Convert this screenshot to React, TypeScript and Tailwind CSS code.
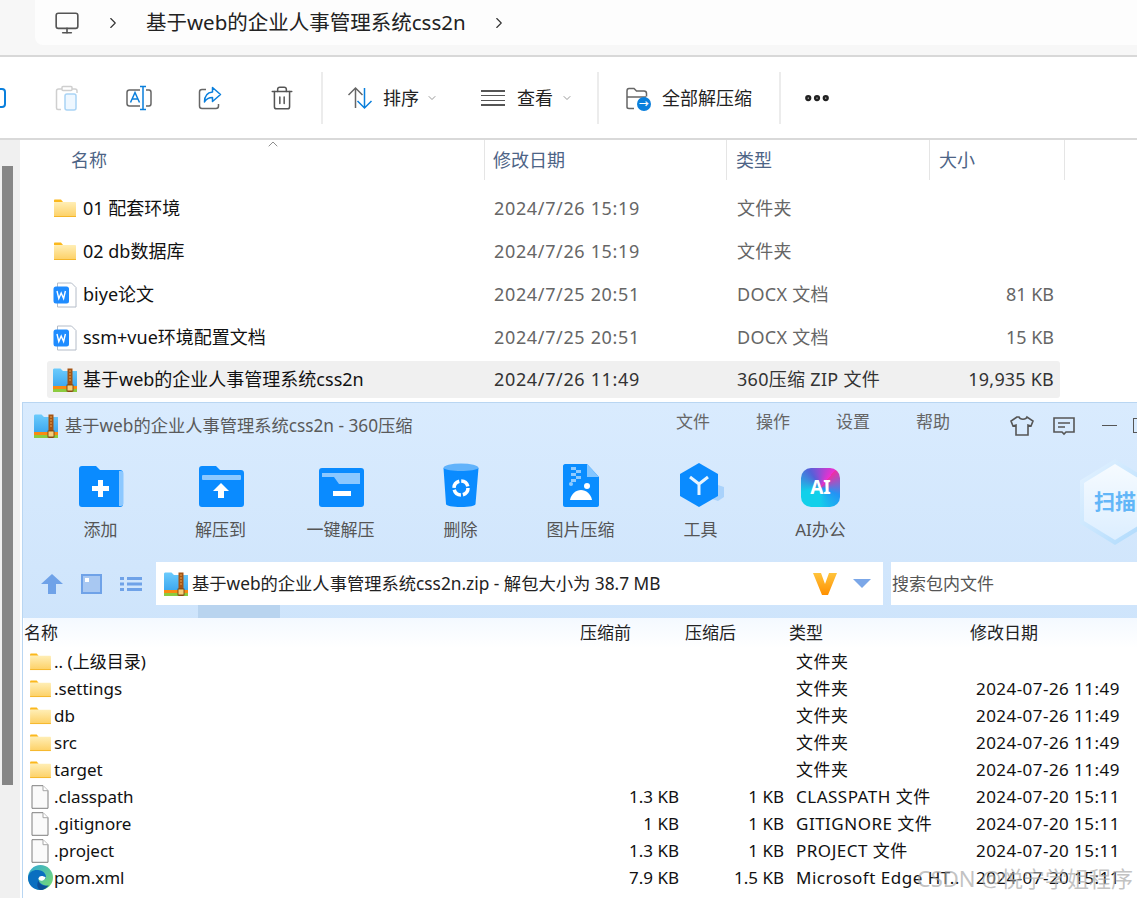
import React from "react";
import { ChevronDown, ChevronRight, ChevronUp, Ellipsis, Monitor, Trash2 } from "lucide-react";

const uiFont = { fontFamily: '"Noto Sans", "Noto Sans CJK SC", sans-serif' };

const FolderIcon = ({ className }: { className: string }) => (
  <svg viewBox="0 0 24 19" className={className}>
    <defs>
      <linearGradient id="folderFace" x1="0" y1="0" x2="0" y2="1">
        <stop offset="0" stopColor="#ffeeb5" />
        <stop offset="1" stopColor="#fdd064" />
      </linearGradient>
    </defs>
    <path d="M1 1.5C1 .9 1.4.5 2 .5h6l2 2.5H1z" fill="#fbb81c" />
    <rect x="1" y="3" width="22" height="15" rx="0.8" fill="url(#folderFace)" />
    <rect x="1" y="17" width="22" height="1" fill="#f5b62a" />
  </svg>
);

const WordIcon = () => (
  <svg viewBox="0 0 24 26" className="h-[26px] w-[24px] shrink-0">
    <path d="M4.5 1h14l4.5 4.5V25H4.5z" fill="#fff" stroke="#b4bcc8" />
    <rect x="0.5" y="4.5" width="15.5" height="17" rx="2.5" fill="#1f8cff" />
    <path d="M4 9l1.8 7.5L8.2 11l2.4 5.5L12.4 9" fill="none" stroke="#fff" strokeWidth="1.4" />
  </svg>
);

const ZipIcon = ({ className }: { className: string }) => (
  <svg viewBox="0 0 24 24" className={className}>
    <defs>
      <linearGradient id="zipFace" x1="0" y1="0" x2="0" y2="1">
        <stop offset="0" stopColor="#6ccbfc" />
        <stop offset="1" stopColor="#3ea9f0" />
      </linearGradient>
    </defs>
    <path d="M0 2C0 1 .6.500 1.500.500h6L10 3h14v15H0z" fill="url(#zipFace)" />
    <rect x="0" y="18" width="24" height="3" fill="#f98a12" />
    <rect x="0" y="21" width="24" height="3" fill="#8ccb3f" />
    <rect x="14.500" y="0.500" width="5" height="23.500" fill="#a55413" />
    <path d="M16 3h2M16 6h2M16 9h2M16 12h2" stroke="#e7a552" strokeWidth="1.200" />
    <rect x="14" y="17" width="6" height="6" fill="#f6cf7a" stroke="#6d3a0c" strokeWidth="0.800" />
  </svg>
);

const FileIcon = () => (
  <svg viewBox="0 0 18 24" className="h-[24px] w-[18px]">
    <path d="M1 .700h11l5 5v17.600H1z" fill="#fafafa" stroke="#7f7f7f" />
    <path d="M12 .700v5h5" fill="#fff" stroke="#a6a6a6" />
  </svg>
);

const EdgeIcon = () => (
  <svg viewBox="0 0 24 24" className="h-[25px] w-[25px]">
    <defs>
      <linearGradient id="edgeTop" x1="0" y1="0" x2="1" y2="1">
        <stop offset="0" stopColor="#2ea7d8" />
        <stop offset="1" stopColor="#7ee06a" />
      </linearGradient>
    </defs>
    <circle cx="12" cy="12" r="12" fill="url(#edgeTop)" />
    <path d="M0 12C1 6 6 4 11 5c5 1 7 5 6 8-3 1-7 0-7 0 0 4 4 7 9 7-2 2.500-5 4-7 4C5 24 0 19 0 12z" fill="#0a6fc0" />
    <path d="M10 13c1-3 4-3 7-1-1 2-2 3-4 3-1.500 0-3-1-3-2z" fill="#fff" />
    <path d="M10 15c1 4 5 6 10 4.500-2 3-5 4.500-8 4.500-3-1-4-5-2-9z" fill="#0c4f96" />
  </svg>
);

const FolderPlus = () => (
  <svg viewBox="0 0 46 42" className="h-[42px] w-[46px]">
    <path d="M1 4c0-2 1-3 3-3h14l4 4h20c2 0 3 1 3 3v31c0 2-1 3-3 3H4c-2 0-3-1-3-3z" fill="#0a8bff" />
    <path d="M41 6h2c2 0 2.500 1 2.500 3v29c0 2-1 3-2.500 3h-2z" fill="#8cc8ff" />
    <rect x="14" y="21" width="17" height="5" fill="#fff" />
    <rect x="20" y="15" width="5" height="17" fill="#fff" />
  </svg>
);

const FolderUp = () => (
  <svg viewBox="0 0 46 42" className="h-[42px] w-[46px]">
    <path d="M1 4c0-2 1-3 3-3h14l4 4h21c2 0 3 1 3 3v31c0 2-1 3-3 3H4c-2 0-3-1-3-3z" fill="#0a8bff" />
    <rect x="4" y="10" width="39" height="5" rx="1" fill="#8cc8ff" />
    <path d="M23 18l8 8h-5v7h-6v-7h-5z" fill="#fff" />
  </svg>
);

const FolderMinus = () => (
  <svg viewBox="0 0 46 42" className="h-[42px] w-[46px]">
    <rect x="1" y="3" width="45" height="39" rx="3" fill="#0a8bff" />
    <path d="M4 8h38v11H21l-5-7H4z" fill="#8cc8ff" />
    <rect x="15" y="26" width="18" height="5" fill="#fff" />
  </svg>
);

const BinIcon = () => (
  <svg viewBox="0 0 36 44" className="h-[44px] w-[36px]">
    <ellipse cx="18" cy="5" rx="17.500" ry="4.500" fill="#62b3fb" />
    <path d="M.500 5c3 4 32 4 35 0l-3 36c-.2 2-6 3-14.500 3S3.200 43 3 41z" fill="#0a8bff" />
    <circle cx="18" cy="25" r="7" fill="none" stroke="#fff" strokeWidth="3.500" strokeDasharray="9 2" />
  </svg>
);

const ImageZipIcon = () => (
  <svg viewBox="0 0 36 43" className="h-[43px] w-[36px]">
    <path d="M0 2C0 1 1 0 2 0h22l12 13v28c0 1-1 2-2 2H2c-1 0-2-1-2-2z" fill="#0a8dff" />
    <path d="M24 0l12 13H24z" fill="#85c6ff" />
    <path d="M8 3h5v3H8zM13 6h5v3h-5zM8 9h5v3H8zM13 12h5v3h-5zM8 15h5v3H8z" fill="#8fcbff" />
    <circle cx="8" cy="20" r="2" fill="#8fcbff" />
    <circle cx="24" cy="22" r="3" fill="#fff" />
    <path d="M7 36c1-6 6-10 11-10s10 4 11 10z" fill="#fff" />
  </svg>
);

const ToolIcon = () => (
  <svg viewBox="0 0 46 44" className="ml-[5px] h-[44px] w-[46px]">
    <path d="M38 22l6 2v10l-6 4-6-2z" fill="#a9d2fb" />
    <path d="M19 0l19 11v22L19 44 0 33V11z" fill="#0a8bff" />
    <path d="M10 14l9 7 9-7M19 21v11" fill="none" stroke="#e6f4ff" strokeWidth="3" />
  </svg>
);

const AiIcon = () => (
  <div className="flex h-[39px] w-[39px] items-center justify-center rounded-[10px] bg-[conic-gradient(from_40deg,#ee2fa5,#2394f5,#12d0ea,#12d0ea,#5560d8,#ee2fd0)]">
    <span className="text-[19px] leading-none font-bold text-white">AI</span>
  </div>
);

const tools = [
  { label: "添加", icon: <FolderPlus /> },
  { label: "解压到", icon: <FolderUp /> },
  { label: "一键解压", icon: <FolderMinus /> },
  { label: "删除", icon: <BinIcon /> },
  { label: "图片压缩", icon: <ImageZipIcon /> },
  { label: "工具", icon: <ToolIcon /> },
  { label: "AI办公", icon: <AiIcon /> },
];

const explorerRows = [
  { name: "01 配套环境", date: "2024/7/26 15:19", type: "文件夹", size: "", icon: "folder" },
  { name: "02 db数据库", date: "2024/7/26 15:19", type: "文件夹", size: "", icon: "folder" },
  { name: "biye论文", date: "2024/7/25 20:51", type: "DOCX 文档", size: "81 KB", icon: "word" },
  { name: "ssm+vue环境配置文档", date: "2024/7/25 20:51", type: "DOCX 文档", size: "15 KB", icon: "word" },
];

const zipRows = [
  { name: ".. (上级目录)", before: "", after: "", type: "文件夹", date: "", icon: "folder" },
  { name: ".settings", before: "", after: "", type: "文件夹", date: "2024-07-26 11:49", icon: "folder" },
  { name: "db", before: "", after: "", type: "文件夹", date: "2024-07-26 11:49", icon: "folder" },
  { name: "src", before: "", after: "", type: "文件夹", date: "2024-07-26 11:49", icon: "folder" },
  { name: "target", before: "", after: "", type: "文件夹", date: "2024-07-26 11:49", icon: "folder" },
  { name: ".classpath", before: "1.3 KB", after: "1 KB", type: "CLASSPATH 文件", date: "2024-07-20 15:11", icon: "file" },
  { name: ".gitignore", before: "1 KB", after: "1 KB", type: "GITIGNORE 文件", date: "2024-07-20 15:11", icon: "file" },
  { name: ".project", before: "1.3 KB", after: "1 KB", type: "PROJECT 文件", date: "2024-07-20 15:11", icon: "file" },
  { name: "pom.xml", before: "7.9 KB", after: "1.5 KB", type: "Microsoft Edge HT..", date: "2024-07-20 15:11", icon: "edge" },
];

const Toolbar = () => (
  <div className="flex h-[83px] shrink-0 items-center border-b-2 border-[#d9d9d9] bg-white pt-px">
    <div className="flex h-[52px] w-[323px] items-center border-r-2 border-[#ececec]">
      <div className="-ml-[10px] h-[20px] w-[16px] rounded-[4px] border-2 border-[#0a7fdc]" />
      <svg viewBox="0 0 24 26" className="ml-[49px] h-[26px] w-[24px]" fill="none">
        <path d="M7 4H3.500C2 4 1.500 5 1.500 6v17c0 1 .5 1.500 1.500 1.500h3" stroke="#cfcfcf" strokeWidth="1.500" />
        <path d="M17 4h3c1 0 2 .7 2 2v2" stroke="#cfcfcf" strokeWidth="1.500" />
        <rect x="7" y="1.500" width="10" height="4" rx="1" stroke="#cfcfcf" strokeWidth="1.500" />
        <rect x="10" y="9" width="11" height="16" rx="2" fill="#eef7ff" stroke="#a9d3f5" strokeWidth="1.500" />
      </svg>
      <svg viewBox="0 0 26 26" className="ml-[47px] h-[26px] w-[26px]" fill="none">
        <path d="M14 5H3.500C2 5 1 6 1 7.500v11C1 20 2 21 3.500 21H14M20 5h3c1 0 2 1 2 2.500v11c0 1.500-1 2.500-2 2.500h-3" stroke="#666" strokeWidth="1.500" />
        <path d="M4.500 17.500L9 7.500l4.500 10M6 14h6" stroke="#0a7fdc" strokeWidth="1.500" />
        <path d="M14 1.500h6M14 24.500h6M17 1.500v23" stroke="#0a7fdc" strokeWidth="1.500" />
      </svg>
      <svg viewBox="0 0 24 24" className="ml-[46px] h-[24px] w-[24px]" fill="none">
        <path d="M8 3.500H4C2.500 3.500 1.500 4.500 1.500 6v14c0 1.500 1 2.500 2.500 2.500h14c1.500 0 2.500-1 2.500-2.500v-2" stroke="#666" strokeWidth="1.500" />
        <path d="M14.500 1.500L22.500 8.500l-8 7v-4c-4 0-6 1-8 4.500 0-6 3-9.500 8-10z" stroke="#0a7fdc" strokeWidth="1.500" strokeLinejoin="round" />
      </svg>
      <Trash2 strokeWidth={1.4} className="ml-[47px] h-[26px] w-[26px] text-[#555]" />
    </div>
    <div className="flex h-[52px] w-[276px] items-center border-r-2 border-[#ececec]">
      <svg viewBox="0 0 26 24" className="ml-[24px] h-[24px] w-[26px]" fill="none" strokeWidth="1.500">
        <path d="M8.500 22V2M1.500 9l7-7 7 7" stroke="#666" />
        <path d="M17.500 2v20M10.500 15l7 7 7-7" stroke="#0a7fdc" />
      </svg>
      <span className="ml-[10px] text-[18px] text-[#222]">排序</span>
      <ChevronDown strokeWidth={1.5} className="ml-[7px] h-[12px] w-[12px] text-[#777]" />
      <div className="ml-[43px] flex h-[16px] w-[24px] flex-col justify-between">
        <div className="h-[1.500px] bg-[#555]" />
        <div className="h-[1.500px] bg-[#555]" />
        <div className="h-[1.500px] bg-[#555]" />
        <div className="h-[1.500px] bg-[#555]" />
      </div>
      <span className="ml-[12px] text-[18px] text-[#222]">查看</span>
      <ChevronDown strokeWidth={1.5} className="ml-[8px] h-[12px] w-[12px] text-[#777]" />
    </div>
    <div className="flex h-[52px] w-[182px] items-center border-r-2 border-[#ececec]">
      <div className="relative ml-[26px] h-[24px] w-[24px]">
        <svg viewBox="0 0 24 24" className="h-[24px] w-[24px]" fill="none">
          <path d="M2 21V5c0-1.500 1-2.500 2-2.500h5l2.500 2.500H19c1.500 0 2.500 1 2.500 2.500v3M2 11h19M2 21c0 1 1 1.500 2 1.500h5" stroke="#666" strokeWidth="1.500" />
        </svg>
        <div className="absolute -right-[2px] -bottom-[1px] flex h-[14px] w-[14px] items-center justify-center rounded-full bg-[#0a7fdc] text-[10px] leading-none font-bold text-white">→</div>
      </div>
      <span className="ml-[13px] text-[18px] text-[#222]">全部解压缩</span>
    </div>
    <Ellipsis strokeWidth={3} className="ml-[21px] h-[30px] w-[30px] text-[#222]" />
  </div>
);

const ExplorerList = () => (
  <div className="h-[262px] shrink-0 bg-white">
    <div className="relative flex h-[40px] items-center text-[18px] text-[#4d6486]">
      <ChevronUp strokeWidth={1} className="absolute top-[-4px] left-[243px] h-[16px] w-[16px] text-[#555]" />
      <div className="flex h-full w-[463px] items-center border-r border-[#e5e5e5] pl-[49px]">名称</div>
      <div className="flex h-full w-[242px] items-center border-r border-[#e5e5e5] pl-[8px]">修改日期</div>
      <div className="flex h-full w-[203px] items-center border-r border-[#e5e5e5] pl-[9px]">类型</div>
      <div className="flex h-full w-[135px] items-center border-r border-[#e5e5e5] pl-[9px]">大小</div>
    </div>
    <div className="mt-[7px] flex flex-col">
      {explorerRows.map((row) => (
        <div key={row.name} className="flex h-[43px] items-center text-[18px] text-[#111]">
          <div className="flex w-[472px] items-center pl-[31px]">
            <div className="flex w-[30px] shrink-0">
              {row.icon === "folder" ? <FolderIcon className="h-[19px] w-[24px]" /> : <WordIcon />}
            </div>
            {row.name}
          </div>
          <div className="w-[243px] tracking-[0.65px] text-[#666]">{row.date}</div>
          <div className="w-[200px] tracking-[0.3px] text-[#666]">{row.type}</div>
          <div className="w-[117px] text-right text-[#666]">{row.size}</div>
        </div>
      ))}
      <div className="mt-[2px] ml-[25px] flex h-[37px] w-[1013px] items-center rounded-[3px] bg-[#f0f0f0] text-[18px] text-[#111]">
        <div className="flex w-[447px] items-center pl-[6px]">
          <div className="flex w-[30px] shrink-0">
            <ZipIcon className="h-[24px] w-[24px]" />
          </div>
          基于web的企业人事管理系统css2n
        </div>
        <div className="w-[243px] tracking-[0.65px] text-[#333]">2024/7/26 11:49</div>
        <div className="w-[200px] tracking-[0.3px] text-[#333]">360压缩 ZIP 文件</div>
        <div className="w-[117px] text-right tracking-[0.2px] text-[#333]">19,935 KB</div>
      </div>
    </div>
  </div>
);

const ZipWindow = () => (
  <div className="relative flex flex-1 flex-col overflow-hidden border-t border-l border-[#b9d6f2] bg-gradient-to-b from-[#d9ebfe] to-[#c1dcf8]">
    <div className="flex h-[45px] shrink-0 items-center">
      <ZipIcon className="ml-[11px] h-[24px] w-[24px] shrink-0" />
      <span className="ml-[7px] w-[611px] shrink-0 text-[17.250px] whitespace-nowrap text-[#5a5a5a]">基于web的企业人事管理系统css2n - 360压缩</span>
      <div className="-mt-[8px] flex shrink-0 text-[17px] text-[#666]">
        <span className="w-[80px]">文件</span>
        <span className="w-[80px]">操作</span>
        <span className="w-[80px]">设置</span>
        <span className="w-[80px]">帮助</span>
      </div>
      <svg viewBox="0 0 26 22" className="ml-[13px] h-[22px] w-[26px] shrink-0" fill="none" stroke="#555" strokeWidth="1.600">
        <path d="M8 2L2 6l2 5 3-1v10h12V10l3 1 2-5-6-4c-1 3-7 3-8 0z" />
      </svg>
      <svg viewBox="0 0 24 20" className="ml-[17px] h-[20px] w-[24px] shrink-0" fill="none" stroke="#555" strokeWidth="1.600">
        <path d="M2 2h20v14h-8l-2 2-2-2H2zM6 7h12M6 11h7" />
      </svg>
      <div className="ml-[26px] h-[1.500px] w-[15px] shrink-0 bg-[#555]" />
      <div className="ml-[16px] h-[15px] w-[15px] shrink-0 border border-[#555]" />
    </div>
    <div className="grid h-[114px] shrink-0 grid-cols-[repeat(7,120px)] pt-[15px] pl-[17.500px]">
      {tools.map((tool) => (
        <div key={tool.label} className="flex flex-col items-center">
          <div className="flex h-[44px] items-end">{tool.icon}</div>
          <span className="mt-[10px] text-[17px] text-[#555]">{tool.label}</span>
        </div>
      ))}
    </div>
    <div className="absolute top-[56px] right-[-13px] flex h-[86px] w-[70px] items-center justify-center bg-gradient-to-br from-[#e6f3ff] to-[#aad8fc] [clip-path:polygon(50%_0,100%_25%,100%_75%,50%_100%,0_75%,0_25%)]">
      <div className="flex h-[76px] w-[62px] items-center justify-center bg-gradient-to-b from-[#f6fbff] to-[#dceeff] [clip-path:polygon(50%_0,100%_25%,100%_75%,50%_100%,0_75%,0_25%)]">
        <span className="text-[21px] font-bold whitespace-nowrap text-[#62b6f8]">扫描</span>
      </div>
    </div>
    <div className="flex h-[43px] shrink-0 items-center">
      <svg viewBox="0 0 22 20" className="ml-[18px] h-[20px] w-[22px]">
        <path d="M11 0l11 10h-7v10H7V10H0z" fill="#6fa2e8" />
      </svg>
      <div className="ml-[18px] flex h-[20px] w-[21px] border-2 border-[#6fa2e8] bg-[#a8c8f2] p-[2px]">
        <div className="h-[4px] w-[4px] bg-white" />
      </div>
      <svg viewBox="0 0 22 16" className="ml-[18px] h-[16px] w-[22px]">
        <path d="M0 1h4v3H0zM7 1h15v3H7zM0 6.500h4v3H0zM7 6.500h15v3H7zM0 12h4v3H0zM7 12h15v3H7z" fill="#6fa2e8" />
      </svg>
      <div className="ml-[14px] flex h-full w-[727px] shrink-0 items-center bg-white text-[17.300px] text-[#222]">
        <ZipIcon className="ml-[8px] h-[24px] w-[24px]" />
        <span className="ml-[4px] w-[621px] whitespace-nowrap">基于web的企业人事管理系统css2n.zip - 解包大小为 38.7 MB</span>
        <svg viewBox="0 0 24 22" className="h-[22px] w-[24px]">
          <defs>
            <linearGradient id="vMark" x1="0" y1="0" x2="0" y2="1">
              <stop offset="0" stopColor="#ffc43d" />
              <stop offset="1" stopColor="#ff9000" />
            </linearGradient>
          </defs>
          <path d="M0 0h8l4 11 4-11h8l-9 22H9z" fill="url(#vMark)" />
        </svg>
        <div className="ml-[16px] h-0 w-0 border-x-[9px] border-t-[9px] border-x-transparent border-t-[#7ba7e8]" />
      </div>
      <div className="ml-[8px] flex h-full flex-1 items-center bg-white pl-[1px] text-[17px] text-[#555]">搜索包内文件</div>
    </div>
    <div className="flex h-[13px] shrink-0">
      <div className="ml-[175px] w-[82px] bg-[#b9d4ef]" />
    </div>
    <div className="flex-1 bg-white pl-px">
      <div className="flex h-[30px] items-center bg-gradient-to-b from-[#f4f9ff] to-white text-[17px] text-[#222]">
        <span className="w-[556px]">名称</span>
        <span className="w-[105px]">压缩前</span>
        <span className="w-[104px]">压缩后</span>
        <span className="w-[181px]">类型</span>
        <span>修改日期</span>
      </div>
      {zipRows.map((row) => (
        <div key={row.name} className="flex h-[27px] items-center text-[17px] text-[#111]">
          <div className="flex w-[556px] items-center">
            <div className="flex w-[30px] shrink-0 justify-center pl-[2px]">
              {row.icon === "folder" && <FolderIcon className="h-[18px] w-[23px]" />}
              {row.icon === "file" && <FileIcon />}
              {row.icon === "edge" && <EdgeIcon />}
            </div>
            {row.name}
          </div>
          <div className="w-[99px] text-right">{row.before}</div>
          <div className="w-[105px] text-right">{row.after}</div>
          <div className="ml-[12px] w-[180px] tracking-[0.5px] whitespace-nowrap">{row.type}</div>
          <div className="tracking-[0.45px] whitespace-nowrap">{row.date}</div>
        </div>
      ))}
    </div>
    <span className="absolute top-[459px] right-[4px] text-[22px] whitespace-nowrap text-[#a8a8a8]/70">CSDN @悦宁学姐程序</span>
  </div>
);

export default function App() {
  return (
    <div className="flex h-[898px] w-[1137px] flex-col overflow-hidden bg-white" style={uiFont}>
      <div className="h-[57px] shrink-0 border-b-2 border-[#d8d8d8] bg-[#f7f7f7]">
        <div className="ml-[35px] flex h-[45px] items-center rounded-bl-[8px] bg-[#fdfdfd] text-[20.500px] text-[#222]">
          <Monitor strokeWidth={1.5} className="ml-[19px] h-[26px] w-[26px] text-[#555]" />
          <ChevronRight strokeWidth={1.5} className="ml-[24px] h-[18px] w-[18px] text-[#333]" />
          <span className="ml-[24px]">基于web的企业人事管理系统css2n</span>
          <ChevronRight strokeWidth={1.5} className="ml-[24px] h-[18px] w-[18px] text-[#333]" />
        </div>
      </div>
      <Toolbar />
      <div className="flex flex-1 overflow-hidden">
        <div className="w-[22px] shrink-0 border-r-2 border-white bg-[#f0f0f0] pt-[26px] pl-[2px]">
          <div className="h-[619px] w-[11px] bg-[#868686]" />
        </div>
        <div className="flex flex-1 flex-col overflow-hidden">
          <ExplorerList />
          <ZipWindow />
        </div>
      </div>
    </div>
  );
}
